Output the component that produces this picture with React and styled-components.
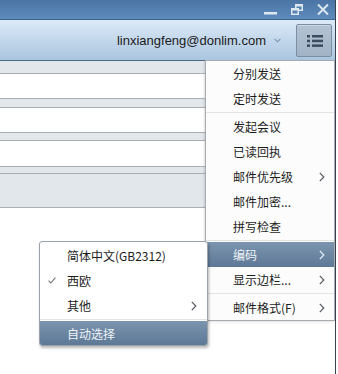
import React from "react";
import styled, { createGlobalStyle, css } from "styled-components";

const Global = createGlobalStyle`
  html, body { margin: 0; padding: 0; background: #ffffff; }
  body {
    width: 338px; height: 374px; overflow: hidden;
    font-family: "Noto Sans CJK SC", "Noto Sans", sans-serif;
  }
`;

const Window = styled.div`
  position: relative;
  width: 335px;
  height: 374px;
  border-right: 1px solid #39434d;
  display: flex;
  flex-direction: column;
  background: #ffffff;
`;

const TitleBar = styled.div`
  height: 20px;
  box-sizing: border-box;
  background: linear-gradient(#4a75a4, #5e8bbc);
  border-bottom: 1px solid #3d6591;
  display: flex;
  justify-content: flex-end;
  align-items: flex-start;
  gap: 14px;
  padding: 4px 6px 0 0;
`;

const WinIcon = styled.svg`
  display: block;
  fill: #dde7f1;
  stroke: #dde7f1;
`;

const Toolbar = styled.div`
  height: 40px;
  box-sizing: border-box;
  background: linear-gradient(#dceaf7, #aac5e0);
  display: flex;
  align-items: center;
  justify-content: flex-end;
  padding: 1px 3px 0 0;
`;

const Account = styled.div`
  display: flex;
  align-items: center;
  gap: 8px;
  margin-right: 15px;
`;

const Email = styled.span`
  font-family: "Liberation Sans", Arial, sans-serif;
  font-size: 13px;
  color: #1a1a1a;
  line-height: 16px;
`;

const MenuButton = styled.div`
  width: 36px;
  height: 33px;
  box-sizing: border-box;
  border: 1px solid #7a8ea4;
  border-radius: 2px;
  background: linear-gradient(#b4c3d3, #a1b3c6);
  box-shadow: inset 0 1px 0 rgba(255, 255, 255, 0.35);
  display: flex;
  align-items: center;
  justify-content: center;
  padding-left: 2px;
`;

const Form = styled.div`
  border-top: 1px solid #4f6884;
  border-bottom: 1px solid #a9aeb3;
  background: #e2e7ec;
  display: flex;
  flex-direction: column;
  padding-top: 12px;
`;

const Field = styled.div`
  height: ${(p) => p.$h}px;
  background: #ffffff;
  border-top: 1px solid #a9aeb3;
  border-bottom: 1px solid #a9aeb3;
  margin-bottom: ${(p) => p.$gap}px;
`;

const Panel = styled.div`
  height: 33px;
  border-top: 1px solid #a9aeb3;
`;

const Menu = styled.div`
  position: absolute;
  left: 205px;
  top: 60px;
  width: 130px;
  box-sizing: border-box;
  background: #fcfcfc;
  border: 1px solid #a6abb0;
  box-shadow: -1px 1px 2px rgba(0, 0, 0, 0.12);
  display: flex;
  flex-direction: column;
`;

const SubMenu = styled.div`
  position: absolute;
  left: 39px;
  top: 241px;
  width: 169px;
  box-sizing: border-box;
  background: #ffffff;
  border: 1px solid #9aa1a8;
  border-radius: 3px;
  overflow: hidden;
  padding-top: 1px;
  box-shadow: 1px 2px 3px rgba(0, 0, 0, 0.28);
  display: flex;
  flex-direction: column;
`;

const Item = styled.div`
  height: ${(p) => p.$h || 25}px;
  display: grid;
  grid-template-columns: 27px 1fr auto;
  align-items: center;
  padding-right: ${(p) => p.$pr}px;
  font-size: 12px;
  color: #1c1c1c;
  white-space: nowrap;
  ${(p) =>
    p.$active &&
    css`
      background: linear-gradient(#7c95af, #5d7896);
      color: #eef3f8;
    `}
`;

const Gutter = styled.span`
  display: flex;
  align-items: center;
  padding-left: 8px;
`;

const Separator = styled.div`
  height: 3px;
  display: flex;
  align-items: center;
  &::before {
    content: "";
    flex: 1;
    height: 1px;
    background: #e1e3e5;
  }
`;

const Arrow = ({ light }) => (
  <svg width="6" height="10" viewBox="0 0 6 10" style={{ display: "block" }}>
    <polyline
      points="0.8,0.8 4.8,5 0.8,9.2"
      fill="none"
      stroke={light ? "#eef3f8" : "#555a60"}
      strokeWidth="1.2"
    />
  </svg>
);

const Check = () => (
  <svg width="8" height="7" viewBox="0 0 8 7" style={{ display: "block" }}>
    <polyline points="0.6,3.6 2.8,6 7.4,0.6" fill="none" stroke="#6d7177" strokeWidth="1.1" />
  </svg>
);

const mainItems = [
  { t: "分别发送" },
  { t: "定时发送" },
  { sep: true },
  { t: "发起会议" },
  { t: "已读回执" },
  { t: "邮件优先级", arrow: true },
  { t: "邮件加密..." },
  { t: "拼写检查" },
  { sep: true },
  { t: "编码", arrow: true, active: true },
  { t: "显示边栏...", arrow: true },
  { sep: true },
  { t: "邮件格式(F)", arrow: true },
];

const subItems = [
  { t: "简体中文(GB2312)" },
  { t: "西欧", check: true },
  { t: "其他", arrow: true },
  { sep: true },
  { t: "自动选择", active: true, h: 24 },
];

const renderItems = (items, pr) =>
  items.map((it, i) =>
    it.sep ? (
      <Separator key={i} />
    ) : (
      <Item key={i} $active={it.active} $pr={pr} $h={it.h}>
        <Gutter>{it.check ? <Check /> : null}</Gutter>
        <span>{it.t}</span>
        {it.arrow ? <Arrow light={it.active} /> : <span />}
      </Item>
    )
  );

export default function App() {
  return (
    <>
      <Global />
      <Window>
        <TitleBar>
          <WinIcon width="13" height="12" viewBox="0 0 13 12">
            <rect x="0" y="8" width="13" height="2.5" stroke="none" />
          </WinIcon>
          <WinIcon width="12" height="11" viewBox="0 0 12 11">
            <rect x="4.75" y="0.75" width="6.5" height="5.5" fill="none" strokeWidth="1.5" />
            <rect x="4" y="0" width="8" height="2.5" stroke="none" />
            <rect x="0" y="4" width="8" height="7" fill="#5884b6" stroke="none" />
            <rect x="0.75" y="4.75" width="6.5" height="5.5" fill="none" strokeWidth="1.5" />
            <rect x="0" y="4" width="8" height="2.5" stroke="none" />
          </WinIcon>
          <WinIcon width="12" height="11" viewBox="0 0 12 11">
            <line x1="1" y1="0.5" x2="11" y2="10.5" strokeWidth="2" />
            <line x1="11" y1="0.5" x2="1" y2="10.5" strokeWidth="2" />
          </WinIcon>
        </TitleBar>
        <Toolbar>
          <Account>
            <Email>linxiangfeng@donlim.com</Email>
            <svg width="7" height="5" viewBox="0 0 7 5" style={{ display: "block" }}>
              <polyline points="0.6,0.8 3.5,3.8 6.4,0.8" fill="none" stroke="#7f93aa" strokeWidth="1.1" />
            </svg>
          </Account>
          <MenuButton>
            <svg width="16" height="12" viewBox="0 0 16 12" style={{ display: "block" }}>
              <g fill="#3a4c5f">
                <rect x="0" y="0" width="3" height="2.5" />
                <rect x="5" y="0" width="11" height="2.5" />
                <rect x="0" y="4.7" width="3" height="2.5" />
                <rect x="5" y="4.7" width="11" height="2.5" />
                <rect x="0" y="9.4" width="3" height="2.5" />
                <rect x="5" y="9.4" width="11" height="2.5" />
              </g>
            </svg>
          </MenuButton>
        </Toolbar>
        <Form>
          <Field $h={24} $gap={8} />
          <Field $h={24} $gap={7} />
          <Field $h={25} $gap={6} />
          <Panel />
        </Form>
        <Menu>{renderItems(mainItems, 9)}</Menu>
        <SubMenu>{renderItems(subItems, 10)}</SubMenu>
      </Window>
    </>
  );
}
